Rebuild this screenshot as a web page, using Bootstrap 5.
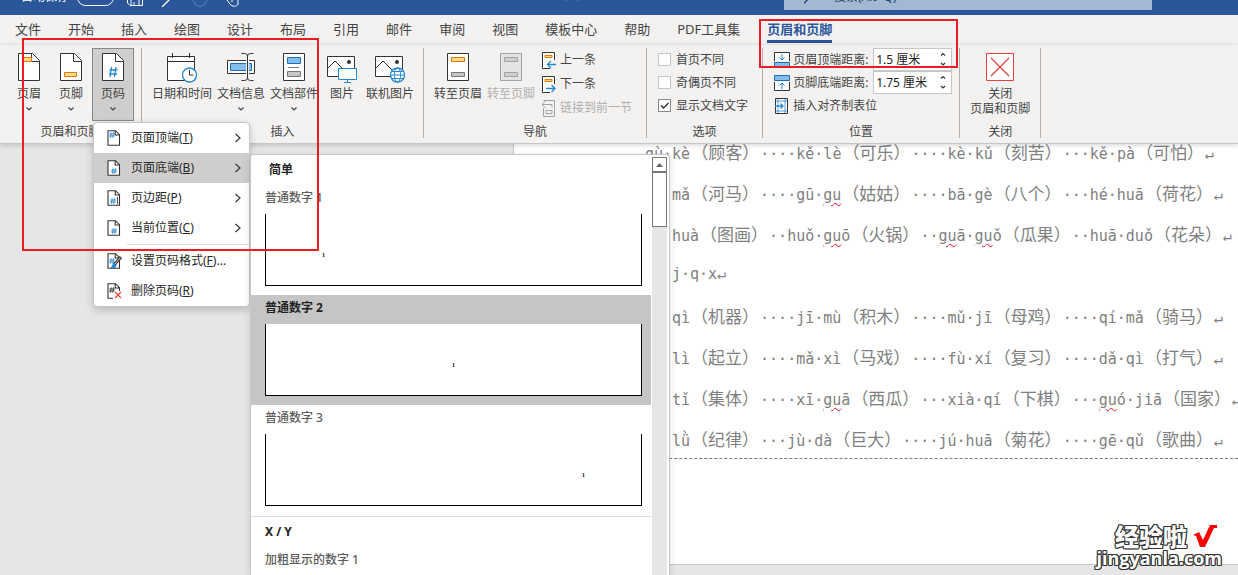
<!DOCTYPE html>
<html lang="zh-CN">
<head>
<meta charset="utf-8">
<meta name="viewport" content="width=device-width, initial-scale=1">
<title>页眉和页脚</title>
<link href="https://cdn.jsdelivr.net/npm/bootstrap@5.3.0/dist/css/bootstrap.min.css" rel="stylesheet">
<style>
  body { font: 12px/16px "Noto Sans", "Noto Sans CJK SC", sans-serif; color: #444; background: #e6e6e6; height: 100vh; overflow: hidden; }
  button, input { font: inherit; color: inherit; }
  svg { display: block; flex: none; }
  .title-strip { background: #2b579a; height: 15px; overflow: hidden; color: #fff; }
  .title-inner { height: 36px; margin-top: -21px; padding-left: 21px; }
  .switch-pill { width: 37px; height: 17px; border: 1px solid #fff; border-radius: 9px; margin-left: 8px; }
  .quick-icons { margin-left: 13px; gap: 17px; }
  .doc-title { margin-left: 216px; gap: 48px; padding-bottom: 4px; }
  .search-field { background: #a3b8d1; color: #1e4076; width: 368px; height: 26px; margin-right: 86px; padding-left: 20px; gap: 17px; }
  .search-field input { border: 0; background: none; padding: 0; outline: 0; }
  .tabs-row { height: 30px; padding-left: 15px; gap: 27px; background: #f3f2f1; font-size: 13px; }
  .tabs-row a { color: #444; text-decoration: none; line-height: 24px; height: 28px; padding-top: 2px; white-space: nowrap; }
  .tabs-row a.current { color: #2b579a; font-weight: 700; border-bottom: 3px solid #2b579a; }
  .ribbon { background: #f3f2f1; height: 99px; padding: 3px 0 5px; border-bottom: 1px solid #c8c6c4; box-shadow: 0 1px 5px rgba(0,0,0,.18); z-index: 5; }
  .tool-group { border-right: 1px solid #b3b0ad; flex: none; }
  .tool-set { padding: 0 7px 0 8px; gap: 1px; }
  .tool-set.tight { gap: 0; }
  .tool-set.wide { padding-right: 14px; }
  .group-name { line-height: 12px; }
  .tool { min-width: 42px; height: 73px; padding: 4px 1px 0; border: 1px solid transparent; background: none; display: flex; flex-direction: column; align-items: center; line-height: 15px; white-space: nowrap; }
  .tool svg:first-child { margin-bottom: 5px; }
  .tool svg.tall:first-child { margin-bottom: 3px; }
  .tool .caret { margin-top: 5px; }
  .tool.pressed { background: #d0cecc; border-color: #8a8886; }
  .line-tool { border: 0; background: none; padding: 0; height: 24px; display: flex; align-items: center; gap: 3px; white-space: nowrap; }
  .dim { color: #b1afad; }
  .opts { padding: 0 14px 0 11px; }
  .opt { height: 23px; gap: 5px; }
  .opt input { appearance: none; width: 13px; height: 13px; margin: 0; background: #fff; border: 1px solid #c8c6c4; }
  .opt input:checked { border-color: #8a8886; background: #fff url("data:image/svg+xml,%3Csvg xmlns='http://www.w3.org/2000/svg' viewBox='0 0 11 11'%3E%3Cpath d='M2 5.5 4.5 8 9.5 3' fill='none' stroke='%23333' stroke-width='1.4'/%3E%3C/svg%3E"); }
  .measures { padding: 0 7px 0 11px; }
  .measure { height: 23px; gap: 3px; }
  .measure label { width: 77px; white-space: nowrap; }
  .spin { width: 79px; height: 23px; background: #fff; border: 1px solid #c8c6c4; color: #222; }
  .spin input { width: 61px; border: 0; background: none; padding: 0 0 0 2px; outline: 0; height: 20px; }
  .spin button { border: 0; background: none; padding: 0; height: 10px; width: 16px; display: grid; place-items: center; }
  .flyout { position: absolute; z-index: 10; background: #fff; border: 1px solid #c8c6c4; color: #262626; }
  .menu { top: 74px; left: 1px; width: 157px; border-radius: 4px; box-shadow: 0 3px 8px rgba(0,0,0,.2); }
  .menu-row { width: 100%; height: 30px; border: 0; background: none; padding: 0 7px 0 13px; display: flex; align-items: center; gap: 7px; white-space: nowrap; }
  .menu-row.hot { background: #d0cecc; }
  .menu-row svg:last-child { margin-left: auto; }
  .menu-line { height: 1px; background: #dcdcdc; margin: 1px 0 1px 33px; }
  .gallery { top: 31px; left: 156px; width: 420px; height: calc(100vh - 154px); overflow: hidden; border-radius: 4px 4px 0 0; border-bottom: 0; box-shadow: 0 3px 8px rgba(0,0,0,.12); padding-right: 2px; }
  .gallery-list { padding-right: 1px; }
  .gallery-head { font-weight: 700; color: #222; line-height: 30px; padding-left: 14px; }
  .gallery-head.first { padding-left: 18px; }
  .gallery-head.ruled { border-top: 1px solid #dcdcdc; margin-top: 1px; }
  .sample { display: flex; flex-direction: column; justify-content: flex-start; width: 100%; border: 0; background: none; padding: 0 9px 9px 14px; height: 110px; text-align: left; font-weight: 500; color: #5c5c5c; }
  .sample-name { line-height: 25px; height: 29px; }
  .sample.hot { background: #c5c5c5; color: #222; font-weight: 700; }
  .sheet { height: 72px; width: 100%; border: 1px solid #000; border-top: 0; background: #fff; padding: 37px 56px 0; font: 700 6px/8px "Liberation Serif", serif; color: #000; }
  .scroll-track { width: 15px; margin-top: 2px; background: #e6e6e6; flex: none; }
  .scroll-track div { background: #fff; border: 1px solid #777; height: 15px; }
  .scroll-track .thumb { height: 55px; }
  .canvas-area { min-height: 0; padding: 0 0 10px 513px; }
  .paper { background: #fff; height: 100%; overflow: hidden; border-left: 1px solid #c8c6c4; border-bottom: 1px solid #c8c6c4; color: #7f7f7f; }
  .lines { margin-top: -13px; font: 15px/41px "DejaVu Sans Mono", "Noto Sans CJK SC", monospace; text-spacing-trim: space-all; font-feature-settings: "chws" 0, "halt" 0; border-bottom: 1px dashed #777; height: 328px; }
  .lines p { margin: 0; height: 41px; padding-left: 158px; white-space: pre; }
  .lines p:first-child { padding-left: 131px; }
  .lines b { font: 17px/41px "Noto Sans CJK SC", sans-serif; font-feature-settings: "chws" 0, "halt" 0; padding: 0 1px; }
  .lines u { text-decoration: underline wavy #e81123 1px; text-underline-offset: 2px; }
  .callout { position: absolute; border: 2px solid #ec1c24; z-index: 20; pointer-events: none; }
  .callout-menu { left: 22px; top: 38px; width: 297px; height: 213px; }
  .callout-tab { left: 759px; top: 19px; width: 199px; height: 49px; }
  .stamp { position: absolute; right: 16px; bottom: 6px; z-index: 20; color: #fff; font: 700 18px/21px "Open Sans", sans-serif; text-shadow: -1px -1px #333, 1px -1px #333, -1px 1px #333, 1px 1px #333, 0 -1px #333, 0 1px #333, -1px 0 #333, 1px 0 #333; }
  .stamp-top { font: 900 24px/24px "Noto Sans CJK SC", sans-serif; gap: 5px; padding-right: 5px; }
</style>
</head>
<body class="d-flex flex-column position-relative">

<svg width="0" height="0" class="position-absolute" aria-hidden="true">
  <symbol id="caret" viewBox="0 0 8 6"><path d="M1.5 1.5 4 4l2.500-2.500" fill="none" stroke="#444" stroke-width="1.200"/></symbol>
  <symbol id="chev" viewBox="0 0 8 10"><path d="M1.500 1 6 5 1.500 9" fill="none" stroke="#333" stroke-width="1.200"/></symbol>
  <symbol id="sheet" viewBox="0 0 22 28"><path d="M.5.5h14l7 7v20H.5z" fill="#fff" stroke="#333"/><path d="M13.500.5v8h8" fill="#fff" stroke="#333"/></symbol>
  <symbol id="mini" viewBox="0 0 14 16"><path d="M1 .7h7.500l4 4v10.600H1z" fill="#fff" stroke="#333" stroke-width="1.100"/><path d="M8.200.7v4.300h4.300" fill="none" stroke="#333" stroke-width="1.100"/></symbol>
  <symbol id="hash" viewBox="0 0 6 6"><path d="M2.200.3 1.500 5.700M4.500.3 3.800 5.700M.4 2h5.400M.2 4h5.400" fill="none" stroke="currentColor" stroke-width=".9"/></symbol>
  <symbol id="picture" viewBox="0 0 30 28"><path d="M.5 3.500h27v20H.5z" fill="#fff" stroke="#333"/><path d="m1 15 7-7 9 9" fill="none" stroke="#333"/><circle cx="22" cy="9" r="2" fill="#333"/></symbol>
</svg>

<header>
  <div class="title-strip">
    <div class="title-inner d-flex align-items-center">
      <span>自动保存</span>
      <span class="switch-pill"></span>
      <div class="quick-icons d-flex align-items-center">
        <svg width="17" height="20" fill="none" stroke="#fff"><path d="M.5 2.500h15v16H3l-2.500-2.500zM4 18v-6h8v6M7 15v3"/></svg>
        <svg width="14" height="20" fill="none" stroke="#fff" stroke-width="1.300"><path d="m1 20 9-9"/></svg>
        <svg width="17" height="20" fill="none" stroke="#4c75b3" stroke-width="1.300"><circle cx="8" cy="12" r="7"/></svg>
        <svg width="13" height="20" fill="none" stroke="#fff"><path d="m1 13 3 4c2 3 7 3 8 0v-5H9V9H6v6"/></svg>
      </div>
      <div class="doc-title d-flex"><span>页眉页码</span><span>兼容性模式</span></div>
      <div class="search-field ms-auto d-flex align-items-center">
        <svg width="13" height="14" fill="none" stroke="#1e4076" stroke-width="1.300"><circle cx="8" cy="5" r="4.300"/><path d="m5 8-5 5.500"/></svg>
        <input value="搜索(Alt+Q)" aria-label="搜索">
      </div>
    </div>
  </div>
  <nav class="tabs-row d-flex">
    <a href="#">文件</a><a href="#">开始</a><a href="#">插入</a><a href="#">绘图</a><a href="#">设计</a><a href="#">布局</a><a href="#">引用</a><a href="#">邮件</a><a href="#">审阅</a><a href="#">视图</a><a href="#">模板中心</a><a href="#">帮助</a><a href="#">PDF工具集</a><a href="#" class="current">页眉和页脚</a>
  </nav>
</header>

<section class="ribbon d-flex position-relative">
  <div class="tool-group d-flex flex-column justify-content-between">
    <div class="tool-set tight d-flex">
      <button class="tool"><svg width="22" height="28"><use href="#sheet"/><path d="M4.500 4.500h9v4h-9z" fill="#ffd98a" stroke="#e07b00"/></svg>页眉<svg class="caret" width="8" height="6"><use href="#caret"/></svg></button>
      <button class="tool"><svg width="22" height="28"><use href="#sheet"/><path d="M4.500 19.500h12v4h-12z" fill="#ffd98a" stroke="#e07b00"/></svg>页脚<svg class="caret" width="8" height="6"><use href="#caret"/></svg></button>
      <div class="position-relative">
        <button class="tool pressed" aria-expanded="true"><svg width="22" height="28"><use href="#sheet"/><path d="M9.500 14 8 24M14 14l-1.500 10M7.500 17h8M7 21h8" fill="none" stroke="#2488d0" stroke-width="1.300"/></svg>页码<svg class="caret" width="8" height="6"><use href="#caret"/></svg></button>
        <div class="flyout menu">
          <button class="menu-row"><svg width="17" height="16" color="#2488d0"><use href="#mini" width="14" height="16"/><use href="#hash" x="2" y="2" width="6" height="6"/></svg><span>页面顶端(<u>T</u>)</span><svg width="8" height="10"><use href="#chev"/></svg></button>
          <button class="menu-row hot"><svg width="17" height="16" color="#2488d0"><use href="#mini" width="14" height="16"/><use href="#hash" x="4" y="8" width="6" height="6"/></svg><span>页面底端(<u>B</u>)</span><svg width="8" height="10"><use href="#chev"/></svg></button>
          <button class="menu-row"><svg width="17" height="16" color="#2488d0"><use href="#mini" width="14" height="16"/><use href="#hash" x="3" y="8" width="6" height="6"/><path d="M10.500 7v7" stroke="#555"/></svg><span>页边距(<u>P</u>)</span><svg width="8" height="10"><use href="#chev"/></svg></button>
          <button class="menu-row"><svg width="17" height="16" color="#2488d0"><use href="#mini" width="14" height="16"/><use href="#hash" x="4" y="8" width="6" height="6"/></svg><span>当前位置(<u>C</u>)</span><svg width="8" height="10"><use href="#chev"/></svg></button>
          <div class="menu-line"></div>
          <button class="menu-row"><svg width="17" height="16" color="#2488d0"><use href="#mini" width="14" height="16"/><use href="#hash" x="2" y="5" width="6" height="6"/><path d="m14 4-7 8" stroke="#333" stroke-width="3"/><path d="m13.500 4.500-6 7" stroke="#ddd"/><path d="M7.500 10.500c-3 0-2 4-5 4.500 4 1 7 0 7-3z" fill="#2488d0"/></svg><span>设置页码格式(<u>F</u>)...</span></button>
          <button class="menu-row"><svg width="17" height="16" color="#333"><path d="M6 15.300H1V.7h7.500l4 4V8M8.200.7V5h4.300" fill="none" stroke="#333" stroke-width="1.100"/><use href="#hash" x="2" y="4" width="6" height="6"/><path d="m8 9 6 6m0-6-6 6" stroke="#e8403a" stroke-width="1.200"/></svg><span>删除页码(<u>R</u>)</span></button>

          <div class="flyout gallery d-flex">
            <div class="gallery-list flex-grow-1">
              <div class="gallery-head first">简单</div>
              <button class="sample"><span class="sample-name">普通数字 1</span><span class="sheet">1</span></button>
              <button class="sample hot"><span class="sample-name">普通数字 2</span><span class="sheet text-center">1</span></button>
              <button class="sample"><span class="sample-name">普通数字 3</span><span class="sheet text-end">1</span></button>
              <div class="gallery-head ruled">X / Y</div>
              <button class="sample"><span class="sample-name">加粗显示的数字 1</span></button>
            </div>
            <div class="scroll-track">
              <div><svg width="13" height="13"><path d="m3 9 3.500-4L10 9z" fill="#666"/></svg></div>
              <div class="thumb"></div>
            </div>
          </div>
        </div>
      </div>
    </div>
    <div class="group-name text-center">页眉和页脚</div>
  </div>

  <div class="tool-group d-flex flex-column justify-content-between">
    <div class="tool-set d-flex">
      <button class="tool"><svg class="tall" width="30" height="30"><path d="M.5 3.500h27v24H.5zM.5 8.500h27" fill="#fff" stroke="#333"/><path d="M5.500 0v5M22.500 0v5" stroke="#333"/><circle cx="22.500" cy="22" r="7" fill="#fff" stroke="#2488d0" stroke-width="1.300"/><path d="M22.500 17v5h4" fill="none" stroke="#333"/></svg>日期和时间</button>
      <button class="tool"><svg width="28" height="28"><path d="M.5 7.500h27v13H.5z" fill="#fff" stroke="#333"/><path d="M3.500 10.500h21v7h-21z" fill="#83beec" stroke="#1f6fb8"/><path d="M20.500 2v24" stroke="#f3f2f1" stroke-width="3"/><path d="M14.500.5h3q3 0 3 2.500v22q0 2.500-3 2.500h-3m12-27h-3q-3 0-3 2.500v22q0 2.500 3 2.500h3" fill="none" stroke="#333"/></svg>文档信息<svg class="caret" width="8" height="6"><use href="#caret"/></svg></button>
      <button class="tool"><svg width="22" height="28"><path d="M.5.5h21v27H.5z" fill="#fff" stroke="#333"/><path d="M4.500 4.500h13v6h-13z" fill="#83beec" stroke="#1f6fb8"/><path d="M4.500 18.500h13v5h-13z" fill="#c8c6c4" stroke="#797775"/><path d="M5 14.500h11" stroke="#797775"/></svg>文档部件<svg class="caret" width="8" height="6"><use href="#caret"/></svg></button>
      <button class="tool"><svg class="tall" width="30" height="30"><use href="#picture" width="30" height="28"/><path d="M11.500 15.500h18v11h-18z" fill="#fff" stroke="#2488d0"/><path d="M20.500 27v2M17 29.500h7" stroke="#2488d0"/></svg>图片</button>
      <button class="tool"><svg class="tall" width="30" height="30"><use href="#picture" width="30" height="28"/><circle cx="22.500" cy="22" r="7" fill="#fff" stroke="#2488d0" stroke-width="1.300"/><path d="M15.500 22h14M17 18.500h11M17 25.500h11" stroke="#2488d0"/><ellipse cx="22.500" cy="22" rx="3.200" ry="7" fill="none" stroke="#2488d0"/></svg>联机图片</button>
    </div>
    <div class="group-name text-center">插入</div>
  </div>

  <div class="tool-group d-flex flex-column justify-content-between">
    <div class="tool-set wide d-flex">
      <button class="tool"><svg width="22" height="28"><path d="M.5.5h21v27H.5z" fill="#fff" stroke="#333"/><path d="M4.500 4.500h13v4h-13z" fill="#ffd98a" stroke="#e07b00"/><path d="M4.500 19.500h13v4h-13z" fill="#c8c6c4" stroke="#797775"/></svg>转至页眉</button>
      <button class="tool dim"><svg width="22" height="28" fill="#e5e4e3" stroke="#a5a3a1"><path d="M.5.5h21v27H.5z"/><path d="M4.500 4.500h13v4h-13zM4.500 19.500h13v4h-13z" fill="#d2d0ce"/></svg>转至页脚</button>
      <div class="ms-1">
        <button class="line-tool"><svg width="15" height="17"><path d="M12.500 8V.500H.5v16H8" fill="#fff" stroke="#333"/><path d="M3 3.500h7v2H3z" fill="#ffd98a" stroke="#e07b00"/><path d="M14 12.500H5m4-3.500-3.500 3.500L9 16" fill="none" stroke="#2488d0" stroke-width="1.300"/></svg>上一条</button>
        <button class="line-tool"><svg width="15" height="17"><path d="M12.500 8V.500H.5v16H8" fill="#fff" stroke="#333"/><path d="M3 3.500h7v2H3z" fill="#ffd98a" stroke="#e07b00"/><path d="M4 12.500h9M9.500 9l3.500 3.500L9.500 16" fill="none" stroke="#2488d0" stroke-width="1.300"/></svg>下一条</button>
        <button class="line-tool dim"><svg width="15" height="17" fill="none" stroke="#a5a3a1"><path d="M1.500 8v8.500h11V.500h-11M0 4.500h10v3M3.500 1 0 4.500 3.500 8M4 10.500h6v3H4z"/></svg>链接到前一节</button>
      </div>
    </div>
    <div class="group-name text-center">导航</div>
  </div>

  <div class="tool-group d-flex flex-column justify-content-between">
    <div class="opts">
      <label class="opt d-flex align-items-center"><input type="checkbox">首页不同</label>
      <label class="opt d-flex align-items-center"><input type="checkbox">奇偶页不同</label>
      <label class="opt d-flex align-items-center"><input type="checkbox" checked>显示文档文字</label>
    </div>
    <div class="group-name text-center">选项</div>
  </div>

  <div class="tool-group d-flex flex-column justify-content-between">
    <div class="measures">
      <div class="measure d-flex align-items-center">
        <svg width="16" height="16"><path d="M.5 9V.500h15V9" fill="#fff" stroke="#333"/><path d="M.5 10.500h15v5H.5z" fill="#83beec" stroke="#1f6fb8"/><path d="M8 2v6M5.500 5.500 8 8l2.500-2.500" fill="none" stroke="#2488d0"/></svg>
        <label for="top-gap">页眉顶端距离:</label>
        <div class="spin d-flex"><input id="top-gap" value="1.5 厘米"><div><button aria-label="增加"><svg width="8" height="6"><path d="M2 4.500 4 2.500l2 2" fill="none" stroke="#333" stroke-width="1.200"/></svg></button><button aria-label="减少"><svg width="8" height="6"><path d="m2 2 2 2 2-2" fill="none" stroke="#333" stroke-width="1.200"/></svg></button></div></div>
      </div>
      <div class="measure d-flex align-items-center">
        <svg width="16" height="16"><path d="M.5 7v8.500h15V7" fill="#fff" stroke="#333"/><path d="M.5.5h15v5H.5z" fill="#83beec" stroke="#1f6fb8"/><path d="M8 14V8M5.500 10.500 8 8l2.500 2.500" fill="none" stroke="#2488d0"/></svg>
        <label for="bottom-gap">页脚底端距离:</label>
        <div class="spin d-flex"><input id="bottom-gap" value="1.75 厘米"><div><button aria-label="增加"><svg width="8" height="6"><path d="M2 4.500 4 2.500l2 2" fill="none" stroke="#333" stroke-width="1.200"/></svg></button><button aria-label="减少"><svg width="8" height="6"><path d="m2 2 2 2 2-2" fill="none" stroke="#333" stroke-width="1.200"/></svg></button></div></div>
      </div>
      <button class="line-tool"><svg width="16" height="16" fill="none"><path d="M1.500.5h12v15h-12z" fill="#fff" stroke="#333"/><path d="M4 1v14M11 1v14M2 3h11M2 13h11" stroke="#2488d0" stroke-width=".8"/><path d="M1 8h8M6.500 5.500 9 8l-2.500 2.500" stroke="#2488d0" stroke-width="1.300"/></svg>插入对齐制表位</button>
    </div>
    <div class="group-name text-center">位置</div>
  </div>

  <div class="tool-group d-flex flex-column justify-content-between">
    <div class="px-2">
      <button class="tool"><svg width="28" height="28"><path d="M.5.5h27v27H.5z" fill="#fff" stroke="#e8403a"/><path d="m5 5 18 18m0-18L5 23" stroke="#e8403a" stroke-width="1.200"/></svg>关闭<br>页眉和页脚</button>
    </div>
    <div class="group-name text-center">关闭</div>
  </div>
</section>

<main class="canvas-area flex-grow-1">
  <article class="paper">
    <div class="lines">
<p>gù·kè<b>（顾客）</b>····kě·lè<b>（可乐）</b>····kè·kǔ<b>（刻苦）</b>···kě·pà<b>（可怕）</b>↵</p>
<p>mǎ<b>（河马）</b>····gū·<u>gu</u><b>（姑姑）</b>····bā·gè<b>（八个）</b>···hé·huā<b>（荷花）</b>↵</p>
<p>huà<b>（图画）</b>··huǒ·<u>gu</u>ō<b>（火锅）</b>··<u>gu</u>ā·<u>gu</u>ǒ<b>（瓜果）</b>··huā·duǒ<b>（花朵）</b>↵</p>
<p>j·q·x↵</p>
<p>qì<b>（机器）</b>····jī·mù<b>（积木）</b>····mǔ·jī<b>（母鸡）</b>····qí·mǎ<b>（骑马）</b>↵</p>
<p>lì<b>（起立）</b>····mǎ·xì<b>（马戏）</b>····fù·xí<b>（复习）</b>····dǎ·qì<b>（打气）</b>↵</p>
<p>tǐ<b>（集体）</b>····xī·<u>gu</u>ā<b>（西瓜）</b>···xià·qí<b>（下棋）</b>···<u>gu</u>ó·jiā<b>（国家）</b>↵</p>
<p>lǜ<b>（纪律）</b>···jù·dà<b>（巨大）</b>····jú·huā<b>（菊花）</b>····gē·qǔ<b>（歌曲）</b>↵</p>
    </div>
  </article>
</main>

<div class="callout callout-menu"></div>
<div class="callout callout-tab"></div>
<div class="stamp">
  <div class="stamp-top d-flex justify-content-end">经验啦<svg width="25" height="24"><path d="m1 11 6-3 4 8 7-15h7v3h-3l-9 19H8L4 12z" fill="#f00"/></svg></div>
  <div>jingyanla.com</div>
</div>

<script src="https://cdn.jsdelivr.net/npm/bootstrap@5.3.0/dist/js/bootstrap.bundle.min.js"></script>
</body>
</html>
